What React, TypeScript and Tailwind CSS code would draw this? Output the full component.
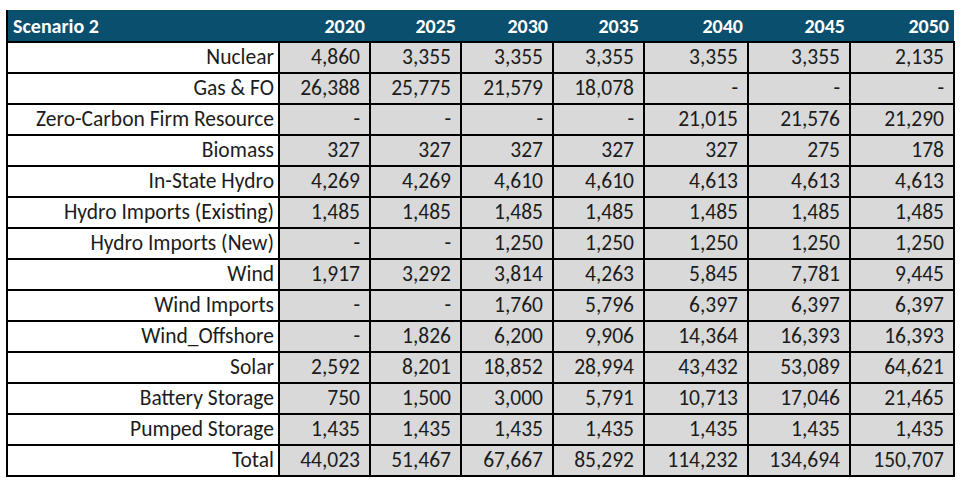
import React from "react";

const years = ["2020", "2025", "2030", "2035", "2040", "2045", "2050"];

const rows: [string, string[]][] = [
  ["Nuclear", ["4,860", "3,355", "3,355", "3,355", "3,355", "3,355", "2,135"]],
  ["Gas & FO", ["26,388", "25,775", "21,579", "18,078", "-", "-", "-"]],
  ["Zero-Carbon Firm Resource", ["-", "-", "-", "-", "21,015", "21,576", "21,290"]],
  ["Biomass", ["327", "327", "327", "327", "327", "275", "178"]],
  ["In-State Hydro", ["4,269", "4,269", "4,610", "4,610", "4,613", "4,613", "4,613"]],
  ["Hydro Imports (Existing)", ["1,485", "1,485", "1,485", "1,485", "1,485", "1,485", "1,485"]],
  ["Hydro Imports (New)", ["-", "-", "1,250", "1,250", "1,250", "1,250", "1,250"]],
  ["Wind", ["1,917", "3,292", "3,814", "4,263", "5,845", "7,781", "9,445"]],
  ["Wind Imports", ["-", "-", "1,760", "5,796", "6,397", "6,397", "6,397"]],
  ["Wind_Offshore", ["-", "1,826", "6,200", "9,906", "14,364", "16,393", "16,393"]],
  ["Solar", ["2,592", "8,201", "18,852", "28,994", "43,432", "53,089", "64,621"]],
  ["Battery Storage", ["750", "1,500", "3,000", "5,791", "10,713", "17,046", "21,465"]],
  ["Pumped Storage", ["1,435", "1,435", "1,435", "1,435", "1,435", "1,435", "1,435"]],
  ["Total", ["44,023", "51,467", "67,667", "85,292", "114,232", "134,694", "150,707"]],
];

const widths = [272, 91, 91, 92, 91, 104, 102, 104];

export default function App() {
  return (
    <div className="w-[970px] h-[488px] bg-white pt-[10px] pl-[6px]">
      <table
        className="table-fixed border-collapse text-[21.5px] leading-none text-[#1c1c1c]"
        style={{ width: 947, fontFamily: "Carlito, Lato, 'Liberation Sans', sans-serif" }}
      >
        <colgroup>
          {widths.map((w, i) => (
            <col key={i} style={{ width: w }} />
          ))}
        </colgroup>
        <thead>
          <tr className="h-[32px] bg-[#0a4f6e] text-white text-[20px]">
            <th className="border-l-2 border-black text-left pl-[5px] font-bold">Scenario 2</th>
            {years.map((y) => (
              <th key={y} className="text-right pr-[5px] font-bold">
                {y}
              </th>
            ))}
          </tr>
        </thead>
        <tbody>
          {rows.map(([label, vals]) => (
            <tr key={label} className="h-[31px]">
              <td className="border-2 border-black bg-white text-right pr-[4px] whitespace-nowrap">
                {label}
              </td>
              {vals.map((v, i) => (
                <td key={i} className="border-2 border-black bg-[#d9d9d9] text-right pr-[9px]">
                  {v}
                </td>
              ))}
            </tr>
          ))}
        </tbody>
      </table>
    </div>
  );
}
